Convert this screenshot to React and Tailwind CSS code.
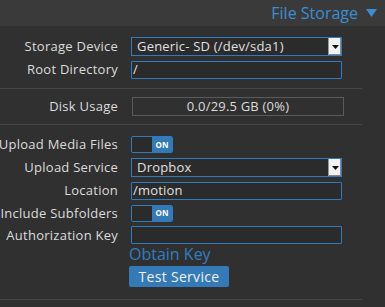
import React from "react";

const font = { fontFamily: '"Open Sans", "Noto Sans", sans-serif' };

function Label({ children }) {
  return (
    <div className="w-[118px] shrink-0 text-right whitespace-nowrap flex justify-end overflow-visible">
      <span className="text-[13px] tracking-[0.25px] text-[#dcdcdc] leading-none">{children}</span>
    </div>
  );
}

function Row({ label, children, h = "h-[23px]" }) {
  return (
    <div className={`flex items-center ${h}`}>
      <Label>{label}</Label>
      <div className="ml-[13px] flex items-center">{children}</div>
    </div>
  );
}

function Select({ value }) {
  return (
    <div className="w-[211px] h-[19px] border border-[#2f7bbd] bg-[#2b2b2b] flex items-center justify-between">
      <span className="pl-[5px] text-[13px] tracking-[0.2px] text-[#e0e0e0] leading-none">{value}</span>
      <div className="w-[13px] h-[17px] bg-[#f2f2f2] border-l border-[#999] flex items-center justify-center shadow-[inset_-1px_-1px_0_#888]">
        <svg width="7" height="4" viewBox="0 0 7 4"><path d="M0 0h7L3.5 4z" fill="#111" /></svg>
      </div>
    </div>
  );
}

function Input({ value }) {
  return (
    <div className="w-[211px] h-[18px] border border-[#2f7bbd] rounded-[1px] bg-[#2b2b2b] flex items-center">
      <span className="pl-[1px] text-[13px] tracking-[0.2px] text-[#e0e0e0] leading-none">{value}</span>
    </div>
  );
}

function Toggle() {
  return (
    <div className="w-[42px] h-[17px] rounded-[2px] border border-[#2f7bbd] flex overflow-hidden">
      <div className="w-[20px] bg-[#2b2b2b]" />
      <div className="flex-1 bg-[#337ab7] flex items-center justify-center">
        <span className="text-[8px] font-bold text-white leading-none">ON</span>
      </div>
    </div>
  );
}

export default function App() {
  return (
    <div className="w-[385px] h-[307px] bg-[#303030] overflow-hidden" style={font}>
      <div className="h-[26px] bg-[#3a3a3a] flex items-center justify-end pr-[8px]">
        <span className="text-[16px] text-[#3a8fd4] leading-none">File Storage</span>
        <svg className="ml-[8px]" width="11" height="8" viewBox="0 0 11 8"><path d="M0 0h11L5.5 8z" fill="#3a8fd4" /></svg>
      </div>
      <div className="w-[362px]">
        <div className="pt-[9px]">
          <Row label="Storage Device"><Select value="Generic- SD (/dev/sda1)" /></Row>
          <Row label="Root Directory"><Input value="/" /></Row>
        </div>
        <div className="mt-[7px] h-px bg-[#464646]" />
        <div className="pt-[8px] pb-[8px]">
          <Row label="Disk Usage" h="h-[19px]">
            <div className="ml-[1px] w-[212px] h-[19px] border border-[#5a5a5a] flex items-center justify-center">
              <span className="text-[13px] tracking-[0.2px] text-[#dcdcdc] leading-none">0.0/29.5 GB (0%)</span>
            </div>
          </Row>
        </div>
        <div className="h-px bg-[#464646]" />
        <div className="pt-[8px]">
          <Row label="Upload Media Files"><Toggle /></Row>
          <Row label="Upload Service"><Select value="Dropbox" /></Row>
          <Row label="Location"><Input value="/motion" /></Row>
          <Row label="Include Subfolders" h="h-[22px]"><Toggle /></Row>
          <Row label="Authorization Key" h="h-[22px]"><Input value="" /></Row>
          <div className="pl-[129px]">
            <div className="text-[16px] text-[#2f7ec4] leading-[16px]">Obtain Key</div>
            <button className="mt-[4px] w-[100px] h-[21px] rounded-[2px] bg-[#337ab7] text-[14px] tracking-[0.3px] text-[#f0f0f0] leading-none">Test Service</button>
          </div>
        </div>
        <div className="mt-[11px] h-px bg-[#464646]" />
      </div>
    </div>
  );
}
